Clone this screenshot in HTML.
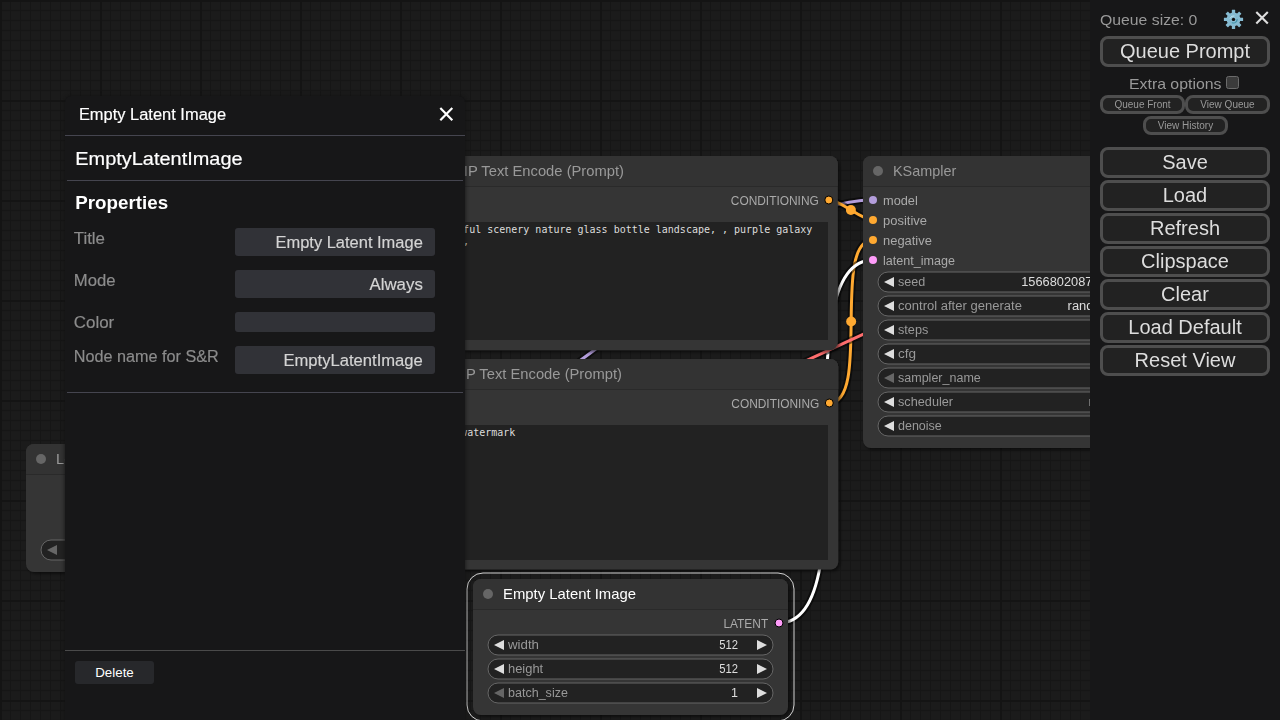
<!DOCTYPE html>
<html lang="en"><head><meta charset="utf-8"><title>ComfyUI</title>
<style>
html,body{margin:0;padding:0;width:1280px;height:720px;overflow:hidden;background:#1b1b1b;}
body{position:relative;font-family:"Liberation Sans",Arial,sans-serif;}
#canvas{opacity:0.999;position:absolute;left:0;top:0;width:1280px;height:720px;display:block;}
#canvas text{font-family:"Liberation Sans",Arial,sans-serif;}
.ta{position:absolute;box-sizing:border-box;background:#222;color:#ddd;font-family:"DejaVu Sans Mono","Liberation Mono",monospace;font-size:10px;line-height:12px;padding:2px;white-space:pre;overflow:hidden;border:0;}
/* side panel */
#panel{opacity:0.999;position:absolute;left:65px;top:96px;width:400px;height:640px;background:#171718;border-radius:6px 6px 0 0;box-shadow:0 0 4px #111;color:#fff;overflow:hidden;}
#panel svg{display:block;}
#panel text{font-family:"Liberation Sans",Arial,sans-serif;}
#del{position:absolute;left:75px;top:661px;width:79px;height:23px;box-sizing:border-box;background:#27282b;border-radius:3px;color:#fff;font-size:13.33px;line-height:23px;text-align:center;}
/* menu */
#menu{opacity:0.999;position:absolute;left:1090px;top:0;width:190px;height:720px;background:#171718;color:#999;font-size:15px;}
#menu .qs{position:absolute;left:10.3px;top:9.5px;line-height:19px;font-size:15px;white-space:nowrap;transform:scaleX(1.052);transform-origin:0 0;}
#menu .btn{position:absolute;left:10px;width:170px;height:31px;box-sizing:border-box;border:3px solid #4e4e4e;border-radius:8px;background:#222;color:#ddd;font-size:20px;line-height:24px;text-align:center;white-space:nowrap;}
#menu .sb{position:absolute;height:19px;box-sizing:border-box;border:3px solid #4e4e4e;border-radius:8px;background:#222;color:#999;font-size:10px;line-height:14px;text-align:center;white-space:nowrap;}
#menu .eo{position:absolute;left:39.3px;top:74px;line-height:19px;font-size:15px;white-space:nowrap;transform:scaleX(1.056);transform-origin:0 0;}
#menu .cb{position:absolute;left:136px;top:76px;width:13px;height:13px;box-sizing:border-box;border:1px solid #6b6b6b;border-radius:2.5px;background:#3b3b3b;}
</style></head><body>

<svg id="canvas" width="1280" height="720" viewBox="0 0 1280 720">
<defs>
<pattern id="grid" x="0" y="0" width="100" height="100" patternUnits="userSpaceOnUse">
<rect width="100" height="100" fill="#1b1b1b"/>
<path d="M10.5,0V100M20.5,0V100M30.5,0V100M40.5,0V100M50.5,0V100M60.5,0V100M70.5,0V100M80.5,0V100M90.5,0V100M0,10.5H100M0,20.5H100M0,30.5H100M0,40.5H100M0,50.5H100M0,60.5H100M0,70.5H100M0,80.5H100M0,90.5H100" stroke="#161616" stroke-width="1.3" fill="none"/>
<path d="M1,0V100M0,1H100" stroke="#141414" stroke-width="2" fill="none"/>
</pattern>
<filter id="sh" x="-5%" y="-5%" width="110%" height="115%"><feDropShadow dx="2" dy="2" stdDeviation="1.5" flood-color="#000" flood-opacity="0.5"/></filter>
</defs>
<rect width="1280" height="720" fill="url(#grid)"/>
<path d="M332.00,508.00 C366.74,508.00 388.26,403.00 423.00,403.00" fill="none" stroke="rgba(0,0,0,0.5)" stroke-width="7" stroke-linejoin="round"/>
<path d="M332.00,508.00 C366.74,508.00 388.26,403.00 423.00,403.00" fill="none" stroke="#FFD500" stroke-width="3" stroke-linejoin="round"/>
<circle cx="377.50" cy="455.50" r="5" fill="#FFD500"/>
<path d="M332.00,508.00 C412.43,508.00 344.57,200.00 425.00,200.00" fill="none" stroke="rgba(0,0,0,0.5)" stroke-width="7" stroke-linejoin="round"/>
<path d="M332.00,508.00 C412.43,508.00 344.57,200.00 425.00,200.00" fill="none" stroke="#FFD500" stroke-width="3" stroke-linejoin="round"/>
<circle cx="378.50" cy="354.00" r="5" fill="#FFD500"/>
<path d="M332.00,488.00 C485.22,488.00 719.78,200.00 873.00,200.00" fill="none" stroke="rgba(0,0,0,0.5)" stroke-width="7" stroke-linejoin="round"/>
<path d="M332.00,488.00 C485.22,488.00 719.78,200.00 873.00,200.00" fill="none" stroke="#B39DDB" stroke-width="3" stroke-linejoin="round"/>
<circle cx="602.50" cy="344.00" r="5" fill="#B39DDB"/>
<path d="M828.80,200.00 C840.93,200.00 860.87,220.00 873.00,220.00" fill="none" stroke="rgba(0,0,0,0.5)" stroke-width="7" stroke-linejoin="round"/>
<path d="M828.80,200.00 C840.93,200.00 860.87,220.00 873.00,220.00" fill="none" stroke="#FFA931" stroke-width="3" stroke-linejoin="round"/>
<circle cx="850.90" cy="210.00" r="5" fill="#FFA931"/>
<path d="M829.30,403.00 C871.49,403.00 830.81,240.00 873.00,240.00" fill="none" stroke="rgba(0,0,0,0.5)" stroke-width="7" stroke-linejoin="round"/>
<path d="M829.30,403.00 C871.49,403.00 830.81,240.00 873.00,240.00" fill="none" stroke="#FFA931" stroke-width="3" stroke-linejoin="round"/>
<circle cx="851.15" cy="321.50" r="5" fill="#FFA931"/>
<path d="M779.00,623.00 C872.74,623.00 779.26,260.00 873.00,260.00" fill="none" stroke="rgba(0,0,0,0.5)" stroke-width="7" stroke-linejoin="round"/>
<path d="M779.00,623.00 C872.74,623.00 779.26,260.00 873.00,260.00" fill="none" stroke="#FFF" stroke-width="3" stroke-linejoin="round"/>
<circle cx="826.00" cy="441.50" r="5" fill="#FFF"/>
<path d="M1169.00,200.00 C1181.51,200.00 1206.49,202.00 1219.00,202.00" fill="none" stroke="rgba(0,0,0,0.5)" stroke-width="7" stroke-linejoin="round"/>
<path d="M1169.00,200.00 C1181.51,200.00 1206.49,202.00 1219.00,202.00" fill="none" stroke="#FF9CF9" stroke-width="3" stroke-linejoin="round"/>
<circle cx="1194.00" cy="201.00" r="5" fill="#FF9CF9"/>
<path d="M332.00,528.00 C566.57,528.00 984.43,222.00 1219.00,222.00" fill="none" stroke="rgba(0,0,0,0.5)" stroke-width="7" stroke-linejoin="round"/>
<path d="M332.00,528.00 C566.57,528.00 984.43,222.00 1219.00,222.00" fill="none" stroke="#FF6E6E" stroke-width="3" stroke-linejoin="round"/>
<circle cx="775.50" cy="375.00" r="5" fill="#FF6E6E"/>
<rect x="26" y="444" width="315" height="128" rx="8" fill="#353535" filter="url(#sh)"/>
<path d="M26,474 V452 a8,8 0 0 1 8,-8 H333 a8,8 0 0 1 8,8 V474 Z" fill="#333"/>
<rect x="26" y="474" width="315" height="1" fill="rgba(0,0,0,0.2)"/>
<circle cx="41" cy="459" r="5" fill="#666"/>
<text x="56" y="464" font-size="14.6" fill="#999" text-anchor="start" textLength="110.7" lengthAdjust="spacingAndGlyphs">Load Checkpoint</text>
<circle cx="332" cy="488.0" r="4" fill="#B39DDB" stroke="#000" stroke-width="1"/>
<text x="322" y="493.0" font-size="12.5" fill="#aaa" text-anchor="end">MODEL</text>
<circle cx="332" cy="508.0" r="4" fill="#FFD500" stroke="#000" stroke-width="1"/>
<text x="322" y="513.0" font-size="12.5" fill="#aaa" text-anchor="end">CLIP</text>
<circle cx="332" cy="528.0" r="4" fill="#FF6E6E" stroke="#000" stroke-width="1"/>
<text x="322" y="533.0" font-size="12.5" fill="#aaa" text-anchor="end">VAE</text>
<rect x="41" y="540" width="285" height="20" rx="10" fill="#222" stroke="#666" stroke-width="1"/>
<path d="M57,545 L47,550 L57,555 Z" fill="#666"/>
<path d="M310,545 L320,550 L310,555 Z" fill="#666"/>
<text x="67" y="554" font-size="12.5" fill="#999" text-anchor="start">ckpt_name</text>
<text x="291" y="554" font-size="12.5" fill="#ddd" text-anchor="end">v1-5-pruned-emaonly.ckpt</text>
<rect x="415" y="156" width="422.8" height="194.3" rx="8" fill="#353535" filter="url(#sh)"/>
<path d="M415,186 V164 a8,8 0 0 1 8,-8 H829.8 a8,8 0 0 1 8,8 V186 Z" fill="#333"/>
<rect x="415" y="186" width="422.8" height="1" fill="rgba(0,0,0,0.2)"/>
<circle cx="430" cy="171" r="5" fill="#666"/>
<text x="445" y="176" font-size="14.6" fill="#999" text-anchor="start" textLength="179.0" lengthAdjust="spacingAndGlyphs">CLIP Text Encode (Prompt)</text>
<circle cx="425" cy="200.0" r="4" fill="#FFD500"/>
<text x="435" y="205.0" font-size="12.5" fill="#aaa" text-anchor="start">clip</text>
<circle cx="828.8" cy="200.0" r="4" fill="#FFA931" stroke="#000" stroke-width="1"/>
<text x="818.8" y="205.0" font-size="12.5" fill="#aaa" text-anchor="end" textLength="88" lengthAdjust="spacingAndGlyphs">CONDITIONING</text>
<rect x="413" y="359" width="425.3" height="210.6" rx="8" fill="#353535" filter="url(#sh)"/>
<path d="M413,389 V367 a8,8 0 0 1 8,-8 H830.3 a8,8 0 0 1 8,8 V389 Z" fill="#333"/>
<rect x="413" y="389" width="425.3" height="1" fill="rgba(0,0,0,0.2)"/>
<circle cx="428" cy="374" r="5" fill="#666"/>
<text x="443" y="379" font-size="14.6" fill="#999" text-anchor="start" textLength="179.0" lengthAdjust="spacingAndGlyphs">CLIP Text Encode (Prompt)</text>
<circle cx="423" cy="403.0" r="4" fill="#FFD500"/>
<text x="433" y="408.0" font-size="12.5" fill="#aaa" text-anchor="start">clip</text>
<circle cx="829.3" cy="403.0" r="4" fill="#FFA931" stroke="#000" stroke-width="1"/>
<text x="819.3" y="408.0" font-size="12.5" fill="#aaa" text-anchor="end" textLength="88" lengthAdjust="spacingAndGlyphs">CONDITIONING</text>
<rect x="863" y="156" width="315" height="292" rx="8" fill="#353535" filter="url(#sh)"/>
<path d="M863,186 V164 a8,8 0 0 1 8,-8 H1170 a8,8 0 0 1 8,8 V186 Z" fill="#333"/>
<rect x="863" y="186" width="315" height="1" fill="rgba(0,0,0,0.2)"/>
<circle cx="878" cy="171" r="5" fill="#666"/>
<text x="893" y="176" font-size="14.6" fill="#999" text-anchor="start" textLength="63.3" lengthAdjust="spacingAndGlyphs">KSampler</text>
<circle cx="873" cy="200.0" r="4" fill="#B39DDB"/>
<text x="883" y="205.0" font-size="12.5" fill="#aaa" text-anchor="start" textLength="34.8" lengthAdjust="spacingAndGlyphs">model</text>
<circle cx="873" cy="220.0" r="4" fill="#FFA931"/>
<text x="883" y="225.0" font-size="12.5" fill="#aaa" text-anchor="start" textLength="44.0" lengthAdjust="spacingAndGlyphs">positive</text>
<circle cx="873" cy="240.0" r="4" fill="#FFA931"/>
<text x="883" y="245.0" font-size="12.5" fill="#aaa" text-anchor="start" textLength="48.9" lengthAdjust="spacingAndGlyphs">negative</text>
<circle cx="873" cy="260.0" r="4" fill="#FF9CF9"/>
<text x="883" y="265.0" font-size="12.5" fill="#aaa" text-anchor="start" textLength="72.1" lengthAdjust="spacingAndGlyphs">latent_image</text>
<circle cx="1169" cy="200.0" r="4" fill="#FF9CF9" stroke="#000" stroke-width="1"/>
<text x="1159" y="205.0" font-size="12.5" fill="#aaa" text-anchor="end" textLength="44.4" lengthAdjust="spacingAndGlyphs">LATENT</text>
<rect x="878" y="272" width="285" height="20" rx="10" fill="#222" stroke="#666" stroke-width="1"/>
<path d="M894,277 L884,282 L894,287 Z" fill="#ddd"/>
<path d="M1147,277 L1157,282 L1147,287 Z" fill="#ddd"/>
<text x="898" y="286" font-size="12.5" fill="#999" text-anchor="start" textLength="27.3" lengthAdjust="spacingAndGlyphs">seed</text>
<text x="1128" y="286" font-size="12.5" fill="#ddd" text-anchor="end" textLength="106.75" lengthAdjust="spacingAndGlyphs">156680208700286</text>
<rect x="878" y="296" width="285" height="20" rx="10" fill="#222" stroke="#666" stroke-width="1"/>
<path d="M894,301 L884,306 L894,311 Z" fill="#ddd"/>
<path d="M1147,301 L1157,306 L1147,311 Z" fill="#ddd"/>
<text x="898" y="310" font-size="12.5" fill="#999" text-anchor="start" textLength="123.9" lengthAdjust="spacingAndGlyphs">control after generate</text>
<text x="1128" y="310" font-size="12.5" fill="#ddd" text-anchor="end" textLength="60.4" lengthAdjust="spacingAndGlyphs">randomize</text>
<rect x="878" y="320" width="285" height="20" rx="10" fill="#222" stroke="#666" stroke-width="1"/>
<path d="M894,325 L884,330 L894,335 Z" fill="#ddd"/>
<path d="M1147,325 L1157,330 L1147,335 Z" fill="#ddd"/>
<text x="898" y="334" font-size="12.5" fill="#999" text-anchor="start" textLength="30.3" lengthAdjust="spacingAndGlyphs">steps</text>
<text x="1128" y="334" font-size="12.5" fill="#ddd" text-anchor="end">20</text>
<rect x="878" y="344" width="285" height="20" rx="10" fill="#222" stroke="#666" stroke-width="1"/>
<path d="M894,349 L884,354 L894,359 Z" fill="#ddd"/>
<path d="M1147,349 L1157,354 L1147,359 Z" fill="#ddd"/>
<text x="898" y="358" font-size="12.5" fill="#999" text-anchor="start" textLength="18.1" lengthAdjust="spacingAndGlyphs">cfg</text>
<text x="1128" y="358" font-size="12.5" fill="#ddd" text-anchor="end">8.0</text>
<rect x="878" y="368" width="285" height="20" rx="10" fill="#222" stroke="#666" stroke-width="1"/>
<path d="M894,373 L884,378 L894,383 Z" fill="#666"/>
<path d="M1147,373 L1157,378 L1147,383 Z" fill="#666"/>
<text x="898" y="382" font-size="12.5" fill="#999" text-anchor="start" textLength="82.8" lengthAdjust="spacingAndGlyphs">sampler_name</text>
<text x="1128" y="382" font-size="12.5" fill="#ddd" text-anchor="end">euler</text>
<rect x="878" y="392" width="285" height="20" rx="10" fill="#222" stroke="#666" stroke-width="1"/>
<path d="M894,397 L884,402 L894,407 Z" fill="#ddd"/>
<path d="M1147,397 L1157,402 L1147,407 Z" fill="#ddd"/>
<text x="898" y="406" font-size="12.5" fill="#999" text-anchor="start" textLength="55.1" lengthAdjust="spacingAndGlyphs">scheduler</text>
<text x="1128" y="406" font-size="12.5" fill="#ddd" text-anchor="end" textLength="39.25" lengthAdjust="spacingAndGlyphs">normal</text>
<rect x="878" y="416" width="285" height="20" rx="10" fill="#222" stroke="#666" stroke-width="1"/>
<path d="M894,421 L884,426 L894,431 Z" fill="#ddd"/>
<path d="M1147,421 L1157,426 L1147,431 Z" fill="#ddd"/>
<text x="898" y="430" font-size="12.5" fill="#999" text-anchor="start" textLength="43.8" lengthAdjust="spacingAndGlyphs">denoise</text>
<text x="1128" y="430" font-size="12.5" fill="#ddd" text-anchor="end">1.00</text>
<rect x="473" y="579" width="315" height="136" rx="8" fill="#353535" filter="url(#sh)"/>
<path d="M473,609 V587 a8,8 0 0 1 8,-8 H780 a8,8 0 0 1 8,8 V609 Z" fill="#333"/>
<rect x="473" y="609" width="315" height="1" fill="rgba(0,0,0,0.2)"/>
<circle cx="488" cy="594" r="5" fill="#666"/>
<text x="503" y="599" font-size="14.6" fill="#fff" text-anchor="start" textLength="133.0" lengthAdjust="spacingAndGlyphs">Empty Latent Image</text>
<rect x="467" y="573" width="327" height="148" rx="16" fill="none" stroke="#fff" stroke-opacity="0.8" stroke-width="1"/>
<circle cx="779" cy="623.0" r="4" fill="#FF9CF9" stroke="#000" stroke-width="1"/>
<text x="768.2" y="628.0" font-size="12.5" fill="#aaa" text-anchor="end" textLength="44.8" lengthAdjust="spacingAndGlyphs">LATENT</text>
<rect x="488" y="635" width="285" height="20" rx="10" fill="#222" stroke="#666" stroke-width="1"/>
<path d="M504,640 L494,645 L504,650 Z" fill="#ddd"/>
<path d="M757,640 L767,645 L757,650 Z" fill="#ddd"/>
<text x="508" y="649" font-size="12.5" fill="#999" text-anchor="start" textLength="31.0" lengthAdjust="spacingAndGlyphs">width</text>
<text x="738" y="649" font-size="12.5" fill="#ddd" text-anchor="end" textLength="18.8" lengthAdjust="spacingAndGlyphs">512</text>
<rect x="488" y="659" width="285" height="20" rx="10" fill="#222" stroke="#666" stroke-width="1"/>
<path d="M504,664 L494,669 L504,674 Z" fill="#ddd"/>
<path d="M757,664 L767,669 L757,674 Z" fill="#ddd"/>
<text x="508" y="673" font-size="12.5" fill="#999" text-anchor="start" textLength="35.2" lengthAdjust="spacingAndGlyphs">height</text>
<text x="738" y="673" font-size="12.5" fill="#ddd" text-anchor="end" textLength="18.8" lengthAdjust="spacingAndGlyphs">512</text>
<rect x="488" y="683" width="285" height="20" rx="10" fill="#222" stroke="#666" stroke-width="1"/>
<path d="M504,688 L494,693 L504,698 Z" fill="#666"/>
<path d="M757,688 L767,693 L757,698 Z" fill="#ddd"/>
<text x="508" y="697" font-size="12.5" fill="#999" text-anchor="start" textLength="59.9" lengthAdjust="spacingAndGlyphs">batch_size</text>
<text x="738" y="697" font-size="12.5" fill="#ddd" text-anchor="end">1</text>
</svg>
<div class="ta" style="left:425px;top:222px;width:403px;height:118px;">beautiful scenery nature glass bottle landscape, , purple galaxy
bottle,</div>
<div class="ta" style="left:423px;top:425px;width:405px;height:135px;">text, watermark</div>
<div id="panel"><svg width="400" height="624" viewBox="65 96 400 624">
<text x="78.9" y="120" font-size="16.3" fill="#fff" stroke="#fff" stroke-width="0.18" textLength="147.2" lengthAdjust="spacingAndGlyphs">Empty Latent Image</text>
<path d="M440.3,108 L452.3,120.3 M452.3,108 L440.3,120.3" stroke="#fff" stroke-width="2.2" fill="none"/>
<rect x="65" y="135" width="400" height="1" fill="#45454f"/>
<text x="75.3" y="165" font-size="18.9" fill="#fff" stroke="#fff" stroke-width="0.2" textLength="167.3" lengthAdjust="spacingAndGlyphs">EmptyLatentImage</text>
<rect x="67" y="180" width="396" height="1" fill="#45454f"/>
<text x="75.3" y="209" font-size="18.9" font-weight="bold" fill="#fff" textLength="92.8" lengthAdjust="spacingAndGlyphs">Properties</text>
<text x="73.75" y="244.4" font-size="16.7" fill="#8c8c8c" stroke="#8c8c8c" stroke-width="0.18" textLength="31.25" lengthAdjust="spacingAndGlyphs">Title</text>
<rect x="235" y="228" width="200" height="28" rx="3" fill="#313237"/>
<text x="422.8" y="248" font-size="16.7" fill="#d4d4d4" stroke="#d4d4d4" stroke-width="0.18" text-anchor="end" textLength="147.3" lengthAdjust="spacingAndGlyphs">Empty Latent Image</text>
<text x="73.75" y="286.4" font-size="16.7" fill="#8c8c8c" stroke="#8c8c8c" stroke-width="0.18" textLength="41.75" lengthAdjust="spacingAndGlyphs">Mode</text>
<rect x="235" y="270" width="200" height="28" rx="3" fill="#313237"/>
<text x="422.8" y="290" font-size="16.7" fill="#d4d4d4" stroke="#d4d4d4" stroke-width="0.18" text-anchor="end" textLength="53.3" lengthAdjust="spacingAndGlyphs">Always</text>
<text x="73.75" y="328.4" font-size="16.7" fill="#8c8c8c" stroke="#8c8c8c" stroke-width="0.18" textLength="40.5" lengthAdjust="spacingAndGlyphs">Color</text>
<rect x="235" y="312" width="200" height="20" rx="3" fill="#313237"/>
<text x="73.75" y="362.4" font-size="16.7" fill="#8c8c8c" stroke="#8c8c8c" stroke-width="0.18" textLength="145" lengthAdjust="spacingAndGlyphs">Node name for S&amp;R</text>
<rect x="235" y="346" width="200" height="28" rx="3" fill="#313237"/>
<text x="422.8" y="366" font-size="16.7" fill="#d4d4d4" stroke="#d4d4d4" stroke-width="0.18" text-anchor="end" textLength="139.4" lengthAdjust="spacingAndGlyphs">EmptyLatentImage</text>
<rect x="67" y="392" width="396" height="1" fill="#45454f"/>
<rect x="65" y="650" width="400" height="1" fill="#4a4a4a"/>
</svg></div>
<div id="del">Delete</div>
<div id="menu">
<div class="qs">Queue size: 0</div>
<svg style="position:absolute;left:133px;top:9px" width="21" height="21" viewBox="-10.5 -10.4 21 21">
<g fill="#86bbd2">
<rect x="-1.65" y="-9.6" width="3.3" height="19.2" rx="0.3"/>
<rect x="-1.65" y="-9.6" width="3.3" height="19.2" rx="0.3" transform="rotate(45)"/>
<rect x="-1.65" y="-9.6" width="3.3" height="19.2" rx="0.3" transform="rotate(90)"/>
<rect x="-1.65" y="-9.6" width="3.3" height="19.2" rx="0.3" transform="rotate(135)"/>
<circle r="6.9"/>
</g>
<circle r="3.9" fill="#88bcd3" stroke="#7ab6cc" stroke-width="0.7"/>
<path d="M-3.4,-1.2 A3.6,3.6 0 0 1 0.6,-3.55" fill="none" stroke="#c4e4f0" stroke-width="1" stroke-linecap="round"/>
<path d="M3.6,0.2 A3.6,3.6 0 0 1 -1.2,3.4" fill="none" stroke="#3f93aa" stroke-width="1.1" stroke-linecap="round"/>
<circle r="1.7" fill="#111"/>
</svg>
<svg style="position:absolute;left:165px;top:10px" width="16" height="16" viewBox="1255 10 16 16"><path d="M1256.3,11.9 L1267.8,23.6 M1267.8,11.9 L1256.3,23.6" stroke="#dedede" stroke-width="2.1" fill="none"/></svg>
<div class="btn" style="top:36px">Queue Prompt</div>
<div class="eo">Extra options</div><div class="cb"></div>
<div class="sb" style="left:10px;top:95px;width:85px">Queue Front</div>
<div class="sb" style="left:95px;top:95px;width:85px">View Queue</div>
<div class="sb" style="left:53px;top:116px;width:85px">View History</div>
<div class="btn" style="top:147px">Save</div>
<div class="btn" style="top:180px">Load</div>
<div class="btn" style="top:213px">Refresh</div>
<div class="btn" style="top:246px">Clipspace</div>
<div class="btn" style="top:279px">Clear</div>
<div class="btn" style="top:312px">Load Default</div>
<div class="btn" style="top:345px">Reset View</div>
</div>
</body></html>
